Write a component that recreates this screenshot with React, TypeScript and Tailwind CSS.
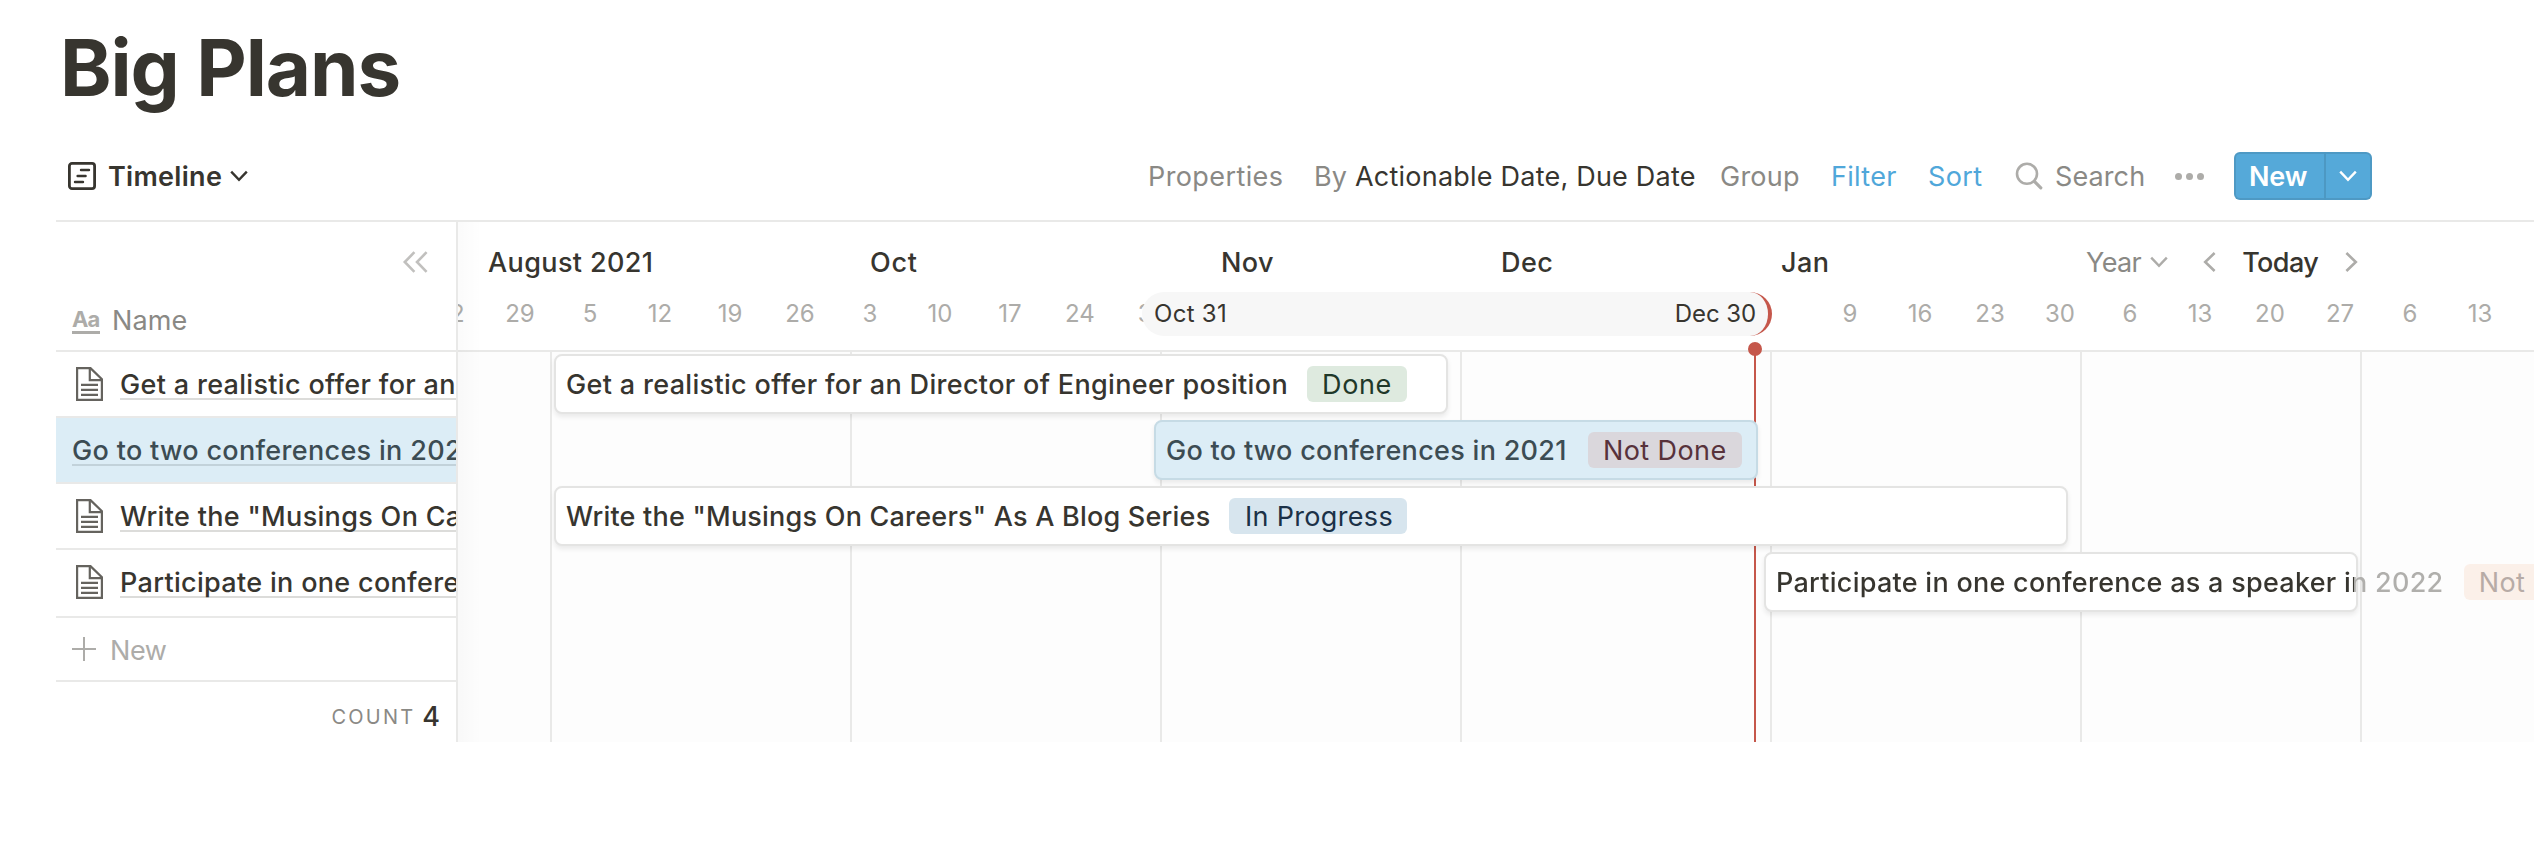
type Row = { name: string; icon: boolean; selected?: boolean };

const rows: Row[] = [
  { name: "Get a realistic offer for an Director of Engineer position", icon: true },
  { name: "Go to two conferences in 2021", icon: false, selected: true },
  { name: 'Write the "Musings On Careers" As A Blog Series', icon: true },
  { name: "Participate in one conference as a speaker in 2022", icon: true },
];

const months = [
  { label: "August 2021", cls: "w-[382px] tracking-[0.38px]" },
  { label: "Oct", cls: "w-[351px] tracking-[0.7px]" },
  { label: "Nov", cls: "w-[280px] tracking-[0.4px]" },
  { label: "Dec", cls: "w-[280px] tracking-[0.4px]" },
  { label: "Jan", cls: "w-[305px] tracking-[0.4px]" },
];

// Weekly ticks; empty strings lie beneath the selected range.
const ticks = [
  "22", "29", "5", "12", "19", "26", "3", "10", "17", "24", "31",
  "", "", "", "", "", "", "", "", "",
  "9", "16", "23", "30", "6", "13", "20", "27", "6", "13",
];

const columns = [
  "w-[94px]", "w-[300px]", "w-[310px]", "w-[300px]", "w-[310px]", "w-[310px]", "w-[280px]",
];

const bars = [
  {
    tracking: "tracking-[0.33px]",
    box: "ml-[96px] w-[894px] border-[#e4e4e3] bg-white text-[#37352f]",
    tag: "Done",
    tagCls: "ml-[19px] bg-[#deeadf] text-[#1f3829] tracking-[0.6px] w-[100px]",
  },
  {
    tracking: "tracking-[0.3px]",
    box: "ml-[696px] w-[604px] border-[#c6dbe5] bg-[#dcedf6] text-[#3c4c53]",
    tag: "Not Done",
    tagCls: "ml-[21px] bg-[#dad7dc] text-[#58323b] tracking-[0.4px] w-[154px]",
  },
  {
    tracking: "tracking-[0.22px]",
    box: "ml-[96px] w-[1514px] border-[#e4e4e3] bg-white text-[#37352f]",
    tag: "In Progress",
    tagCls: "ml-[19px] pl-[1px] bg-[#d7e5ee] text-[#1b3147] tracking-[0.33px] w-[178px]",
  },
  {
    tracking:
      "tracking-[0.27px] bg-clip-text text-transparent bg-[linear-gradient(90deg,#37352f_578px,#b0afac_578px)]",
    box: "ml-[1306px] w-[594px] border-[#e4e4e3] bg-white",
    tag: "Not Done",
    tagCls: "ml-5 bg-[#fbf0e9] text-[#b7aba6] tracking-[0.4px] w-[154px]",
  },
];

function ChevronDown({ className }: { className: string }) {
  return (
    <svg viewBox="0 0 18 12" className={className} fill="none" stroke="currentColor" strokeWidth="2.4">
      <path d="M1.2 1.6 9 9.8l7.8-8.2" />
    </svg>
  );
}

function DocIcon() {
  return (
    <svg viewBox="0 0 27 34" className="ml-[4px] mr-[17px] h-[34px] w-[27px] shrink-0 text-[#65635e]" fill="none" stroke="currentColor" strokeWidth="2.2">
      <path d="M1.1 1.1h13.4L25.9 12.2v20.7H1.1Z" />
      <path d="M13.8 1v12.2H26" />
      <path d="M5 17.8h17M5 22.8h17M5 27.8h17" />
    </svg>
  );
}

function Toolbar() {
  return (
    <div className="flex h-[88px] items-center pl-[68px] pr-[162px] text-[27px] leading-none text-[#8a8985]">
      <svg viewBox="0 0 28 28" className="size-7 text-[#37352f]" fill="none" stroke="currentColor">
        <rect x="1.4" y="1.4" width="25.2" height="25.2" rx="2.6" strokeWidth="2.8" />
        <path d="M13 8h8M9.6 14h8M7 20h8" strokeWidth="2.4" strokeLinecap="round" />
      </svg>
      <span className="ml-3 font-semibold tracking-[0.3px] text-[#37352f]">Timeline</span>
      <ChevronDown className="ml-2 h-3 w-[18px] text-[#37352f]" />

      <div className="ml-auto flex items-center whitespace-nowrap">
        <span className="w-[166px] tracking-[0.4px]">Properties</span>
        <span className="w-[41px]">By</span>
        <span className="w-[365px] tracking-[0.22px] text-[#37352f]">Actionable Date, Due Date</span>
        <span className="w-[111px] tracking-[0.25px]">Group</span>
        <span className="w-[97px] tracking-[0.3px] text-[#50a7da]">Filter</span>
        <span className="w-[87px] tracking-[0.4px] text-[#50a7da]">Sort</span>
        <svg viewBox="0 0 28 28" className="mr-3 size-7 text-[#adaca9]" fill="none" stroke="currentColor" strokeLinecap="round">
          <circle cx="12" cy="11.8" r="10" strokeWidth="2.6" />
          <path d="m19.6 19.6 6.2 6.2" strokeWidth="3.2" />
        </svg>
        <span className="w-[120px] tracking-[0.1px]">Search</span>
        <span className="flex w-[59px] gap-1 text-[#adaca9]">
          <i className="size-[7px] rounded-full bg-current" />
          <i className="size-[7px] rounded-full bg-current" />
          <i className="size-[7px] rounded-full bg-current" />
        </span>
        <div className="flex h-12 w-[138px] overflow-hidden rounded-[6px] bg-[#55a9d9] font-semibold text-white shadow-[inset_0_0_0_2px_rgba(15,15,15,0.1)]">
          <span className="flex w-[92px] items-center border-r-2 border-[#4c98c3] pl-[15px] tracking-[-0.2px]">New</span>
          <span className="flex flex-1 items-center justify-center pr-[2px]">
            <ChevronDown className="h-3 w-[18px]" />
          </span>
        </div>
      </div>
    </div>
  );
}

function NamePanel() {
  return (
    <div className="h-[520px] w-[402px] shrink-0 overflow-hidden border-r-2 border-[#e9e9e8] text-[27px] leading-none">
      <div className="h-[130px] border-b-2 border-[#e9e9e8]">
        <div className="flex h-20 items-center justify-end pr-[28px]">
          <svg viewBox="0 0 26 22" className="h-[22px] w-[26px] text-[#c1c0be]" fill="none" stroke="currentColor" strokeWidth="2.6">
            <path d="M12.4 1.2 2.8 11l9.6 9.8M24.6 1.2 15 11l9.6 9.8" />
          </svg>
        </div>
        <div className="flex h-[36px] items-center pl-4">
          <span className="mr-3 mt-[1px] w-7 border-b-[3px] border-[#adaca9] text-[22px] font-bold leading-[24px] tracking-[-0.8px] text-[#adaca9]">
            Aa
          </span>
          <span className="tracking-[0.15px] text-[#8a8985]">Name</span>
        </div>
      </div>

      {rows.map((r, i) => (
        <div
          key={r.name}
          className={[
            "flex items-center border-b-2 border-[#e9e9e8] pl-4 whitespace-nowrap",
            i === 3 ? "h-[68px] pb-[2px]" : "h-[66px]",
            r.selected ? "bg-[#dcedf6] text-[#3c4c53]" : "text-[#37352f]",
          ].join(" ")}
        >
          {r.icon && <DocIcon />}
          <span
            className={[
              "h-8 border-b-2 pt-[3px] font-medium leading-[28px] tracking-[0.32px]",
              r.selected ? "border-[#c2d2da]" : "border-[#dcdcda]",
            ].join(" ")}
          >
            {r.name}
          </span>
        </div>
      ))}

      <div className="flex h-16 items-center border-b-2 border-[#e9e9e8] pl-4 text-[#adaca9]">
        <svg viewBox="0 0 24 24" className="mr-[14px] size-6" fill="none" stroke="currentColor" strokeWidth="2">
          <path d="M12 0v24M0 12h24" />
        </svg>
        <span className="pt-[2px] tracking-[-0.4px]">New</span>
      </div>

      <div className="flex h-[60px] items-center justify-end pr-4 pt-[9px]">
        <span className="mr-[7px] text-[20px] tracking-[2.2px] text-[#8a8985]">COUNT</span>
        <span className="font-medium text-[#37352f]">4</span>
      </div>
    </div>
  );
}

function ChartHeader() {
  return (
    <div className="relative h-[130px] border-b-2 border-[#e9e9e8]">
      <div className="flex h-20 items-center whitespace-nowrap pl-[30px] text-[27px] leading-none text-[#37352f]">
        {months.map((m) => (
          <span key={m.label} className={`shrink-0 font-medium ${m.cls}`}>
            {m.label}
          </span>
        ))}
        <span className="tracking-[-0.6px] text-[#8a8985]">Year</span>
        <ChevronDown className="ml-[9px] h-3 w-[18px] text-[#adaca9]" />
        <svg viewBox="0 0 13 20" className="ml-[35px] h-5 w-[13px] text-[#adaca9]" fill="none" stroke="currentColor" strokeWidth="2.6">
          <path d="M11.6 1 2.2 10l9.4 9" />
        </svg>
        <span className="ml-[26px] font-medium tracking-[-0.6px]">Today</span>
        <svg viewBox="0 0 13 20" className="ml-[27px] h-5 w-[13px] text-[#adaca9]" fill="none" stroke="currentColor" strokeWidth="2.6">
          <path d="m1.4 1 9.4 9-9.4 9" />
        </svg>
      </div>
      <div className="-ml-[43px] flex h-6 items-center text-[24px] leading-none text-[#adaca9]">
        {ticks.map((t, i) => (
          <span key={i} className="w-[70px] shrink-0 text-center">
            {t}
          </span>
        ))}
      </div>
      <div className="absolute left-[684px] top-[70px] flex h-11 w-[630px] items-center justify-between rounded-[22px] border-r-4 border-[#c5574b] bg-[#f7f7f7] pl-3 pr-3 text-[24px] leading-none text-[#37352f]">
        <span className="tracking-[0.3px]">Oct 31</span>
        <span className="tracking-[-0.1px]">Dec 30</span>
      </div>
    </div>
  );
}

function Chart() {
  return (
    <div className="relative h-[520px] min-w-0 flex-1 overflow-hidden">
      <ChartHeader />
      <div className="relative h-[390px] bg-[#fdfdfd]">
        <div className="flex h-full">
          {columns.map((w, i) => (
            <div key={i} className={`shrink-0 border-r-2 border-[#e9e9e8] ${w}`} />
          ))}
        </div>
        <div className="absolute left-[1296px] top-0 h-full w-[2px] bg-[#c5574b]" />
        <div className="absolute left-[1290px] -top-[10px] size-[14px] rounded-full bg-[#c5574b]" />
        <div className="absolute inset-0">
          {bars.map((b, i) => (
            <div key={i} className="h-[66px] pt-[2px]">
              <div
                className={`flex h-[60px] items-center whitespace-nowrap rounded-[8px] border-2 pl-[10px] text-[27px] leading-none shadow-[0_3px_5px_rgba(15,15,15,0.08)] ${b.box}`}
              >
                <span className={`shrink-0 py-[3px] font-medium ${b.tracking}`}>{rows[i].name}</span>
                <span className={`flex h-9 shrink-0 items-center justify-center rounded-[6px] ${b.tagCls}`}>
                  {b.tag}
                </span>
              </div>
            </div>
          ))}
        </div>
      </div>
      <div className="absolute left-0 top-0 h-full w-6 bg-gradient-to-r from-black/[0.018] to-transparent" />
    </div>
  );
}

export default function App() {
  return (
    <div className="h-[842px] w-[2534px] overflow-hidden bg-white font-['Inter',sans-serif]">
      <h1 className="h-[132px] pl-[60px] pt-[18px] text-[78px] font-bold leading-[100px] tracking-[-1.07px] text-[#37352f]">
        Big Plans
      </h1>
      <Toolbar />
      <div className="ml-14 flex border-t-2 border-[#e9e9e8]">
        <NamePanel />
        <Chart />
      </div>
    </div>
  );
}
